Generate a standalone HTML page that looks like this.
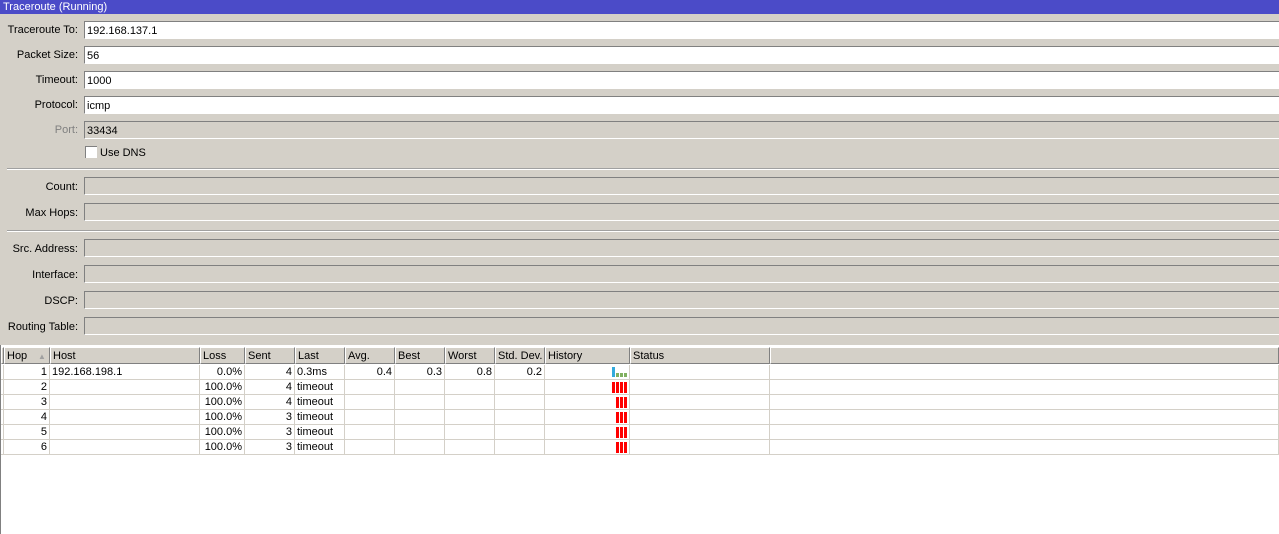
<!DOCTYPE html>
<html><head><meta charset="utf-8"><style>
*{margin:0;padding:0;box-sizing:border-box}
body{width:1279px;height:534px;overflow:hidden;background:#d4d0c8;font-family:"Liberation Sans",Arial,sans-serif;font-size:11px;color:#000;position:relative}
.a{position:absolute}
#title{left:0;top:0;width:1279px;height:14px;background:#4b4bc8;color:#fff;font-size:11px;line-height:14px;padding-left:3px}
.lbl{position:absolute;width:78px;text-align:right;left:0;line-height:19px}
.inp{position:absolute;left:84px;width:1200px;height:18px;background:#fff;border-top:1px solid #808080;border-left:1px solid #808080;border-bottom:1px solid #fff;line-height:18px;padding-left:2px}
.dis{background:#d4d0c8}
.sep{position:absolute;left:7px;width:1272px;height:2px;border-top:1px solid #a0a0a0;border-bottom:1px solid #fff}
#tbl{left:0;top:345px;width:1279px;height:189px;background:#fff;border-left:1px solid #808080}
.hd{position:absolute;top:347px;height:17px;background:#d4d0c8;border-right:1px solid #808080;border-bottom:1px solid #808080;border-top:1px solid #fff;border-left:1px solid #fff;padding-left:2px;line-height:17px}
.c{position:absolute;height:15px;border-right:1px solid #d4d0c8;border-bottom:1px solid #d4d0c8;line-height:15px;padding:0 2px;white-space:nowrap}
.r{text-align:right}
.b{position:absolute;width:3px}
</style></head><body>
<div id="title" class="a">Traceroute (Running)</div>

<div class="lbl" style="top:21px">Traceroute To:</div><div class="inp" style="top:21px">192.168.137.1</div>
<div class="lbl" style="top:46px">Packet Size:</div><div class="inp" style="top:46px">56</div>
<div class="lbl" style="top:71px">Timeout:</div><div class="inp" style="top:71px">1000</div>
<div class="lbl" style="top:96px">Protocol:</div><div class="inp" style="top:96px">icmp</div>
<div class="lbl" style="top:121px;color:#808080">Port:</div><div class="inp dis" style="top:121px">33434</div>
<div class="a" style="left:85px;top:146px;width:12px;height:12px;background:#fff;border-top:1px solid #808080;border-left:1px solid #808080"></div>
<div class="a" style="left:100px;top:145px;line-height:17px">Use DNS</div>
<div class="sep" style="top:168px"></div>
<div class="lbl" style="top:178px">Count:</div><div class="inp dis" style="top:177px"></div>
<div class="lbl" style="top:204px">Max Hops:</div><div class="inp dis" style="top:203px"></div>
<div class="sep" style="top:230px"></div>
<div class="lbl" style="top:240px">Src. Address:</div><div class="inp dis" style="top:239px"></div>
<div class="lbl" style="top:266px">Interface:</div><div class="inp dis" style="top:265px"></div>
<div class="lbl" style="top:292px">DSCP:</div><div class="inp dis" style="top:291px"></div>
<div class="lbl" style="top:318px">Routing Table:</div><div class="inp dis" style="top:317px"></div>

<div id="tbl" class="a"></div>
<div class="hd" style="left:1px;width:3px;padding:0"></div>
<div class="hd" style="left:4px;width:46px">Hop<span style="position:absolute;left:33px;top:0;color:#a0a0a0;font-size:8px">▲</span></div>
<div class="hd" style="left:50px;width:150px">Host</div>
<div class="hd" style="left:200px;width:45px">Loss</div>
<div class="hd" style="left:245px;width:50px">Sent</div>
<div class="hd" style="left:295px;width:50px">Last</div>
<div class="hd" style="left:345px;width:50px">Avg.</div>
<div class="hd" style="left:395px;width:50px">Best</div>
<div class="hd" style="left:445px;width:50px">Worst</div>
<div class="hd" style="left:495px;width:50px">Std. Dev.</div>
<div class="hd" style="left:545px;width:85px">History</div>
<div class="hd" style="left:630px;width:140px">Status</div>
<div class="hd" style="left:770px;width:509px"></div>

<div id="rows"></div>
<script>
var d=[["1","192.168.198.1","0.0%","4","0.3ms","0.4","0.3","0.8","0.2"],
["2","","100.0%","4","timeout","","","",""],
["3","","100.0%","4","timeout","","","",""],
["4","","100.0%","3","timeout","","","",""],
["5","","100.0%","3","timeout","","","",""],
["6","","100.0%","3","timeout","","","",""]];
var cols=[[4,46,1],[50,150,0],[200,45,1],[245,50,1],[295,50,0],[345,50,1],[395,50,1],[445,50,1],[495,50,1],[545,85,0],[630,140,0],[770,509,0]];
var h="";
for(var i=0;i<6;i++){var y=365+i*15;
h+='<div class="c" style="left:1px;width:3px;top:'+y+'px;padding:0"></div>';
for(var j=0;j<cols.length;j++){var t=j<9?d[i][j]:"";
h+='<div class="c'+(cols[j][2]?' r':'')+'" style="left:'+cols[j][0]+'px;width:'+cols[j][1]+'px;top:'+y+'px">'+t+'</div>';}
if(i==0){h+='<div class="b" style="left:612px;top:367px;height:10px;background:#33aadd"></div>';
for(var k=0;k<3;k++)h+='<div class="b" style="left:'+(616+k*4)+'px;top:373px;height:4px;background:#80b060"></div>';}
else{var n=i==1?4:3;for(var k=0;k<n;k++)h+='<div class="b" style="left:'+(624-k*4)+'px;top:'+(y+2)+'px;height:11px;background:#ff0000"></div>';}
}
document.getElementById("rows").innerHTML=h;
</script>
</body></html>
